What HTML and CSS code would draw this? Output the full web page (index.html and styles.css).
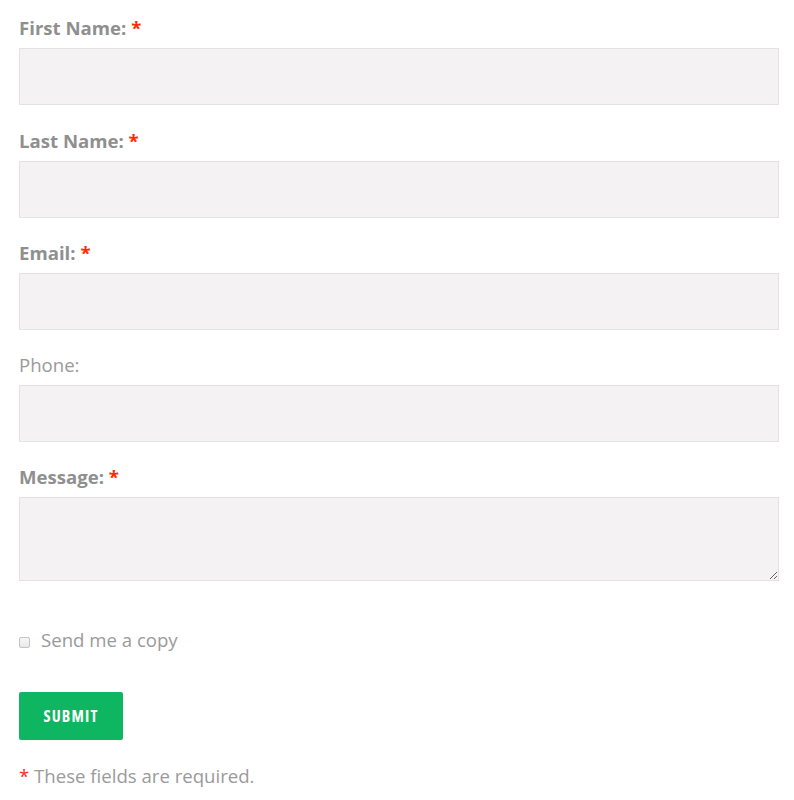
FILE: index.html
```html
<!DOCTYPE html>
<html>
<head>
<meta charset="utf-8">
<link rel="stylesheet" href="styles.css">
</head>
<body>
<form class="contact-form">
  <div class="field first">
    <label class="label required">First Name: <span class="req">*</span></label>
    <input class="input" type="text">
  </div>
  <div class="field">
    <label class="label required">Last Name: <span class="req">*</span></label>
    <input class="input" type="text">
  </div>
  <div class="field">
    <label class="label required">Email: <span class="req">*</span></label>
    <input class="input" type="text">
  </div>
  <div class="field">
    <label class="label">Phone:</label>
    <input class="input" type="text">
  </div>
  <div class="field">
    <label class="label required">Message: <span class="req">*</span></label>
    <textarea class="textarea"></textarea>
  </div>
  <label class="copy-row"><input class="checkbox" type="checkbox"><span>Send me a copy</span></label>
  <button class="submit" type="button">SUBMIT</button>
  <p class="note"><span class="req-light">*</span> These fields are required.</p>
</form>
</body>
</html>
```
FILE: styles.css
```css
html, body {
  margin: 0;
  padding: 0;
  background: #ffffff;
}
body {
  font-family: "Open Sans", "Liberation Sans", sans-serif;
  color: #999999;
}
.contact-form {
  padding: 15px 15px 0 19px;
  display: flex;
  flex-direction: column;
}
.field {
  display: flex;
  flex-direction: column;
  margin-bottom: 22px;
}
.field.first {
  margin-bottom: 23px;
}
.label {
  font-size: 18.6px;
  line-height: 26px;
  margin-bottom: 7px;
  color: #9a9a9a;
}
.label.required {
  font-weight: 700;
  color: #8f8f8f;
}
.req {
  color: #ff2a00;
  font-weight: 700;
}
.req-light {
  color: #ff2a1a;
  font-weight: 400;
}
.input, .textarea {
  box-sizing: border-box;
  width: 760px;
  height: 57px;
  margin: 0;
  background: #f4f2f3;
  border: 1px solid #e4e2e3;
  border-radius: 0;
  outline: none;
}
.textarea {
  height: 84px;
  resize: vertical;
}
.copy-row {
  display: flex;
  align-items: center;
  font-size: 18.6px;
  line-height: 26px;
  margin-top: 24px;
  color: #9a9a9a;
}
.checkbox {
  appearance: none;
  -webkit-appearance: none;
  box-sizing: border-box;
  width: 11px;
  height: 11px;
  margin: 4px 11px 0 0;
  border: 1px solid #c4c4c4;
  border-radius: 2px;
  background: linear-gradient(#f7f7f7, #e9e9e9);
}
.submit {
  align-self: flex-start;
  margin-top: 39px;
  width: 104px;
  height: 48px;
  background: #0fb662;
  color: #ffffff;
  border: none;
  border-radius: 2px;
  font-family: "Open Sans", "Liberation Sans", sans-serif;
  font-stretch: 75%;
  font-weight: 700;
  font-size: 16px;
  letter-spacing: 1.2px;
  padding: 0;
}
.note {
  margin: 23px 0 0;
  font-size: 18.6px;
  line-height: 26px;
  color: #9a9a9a;
}
```
